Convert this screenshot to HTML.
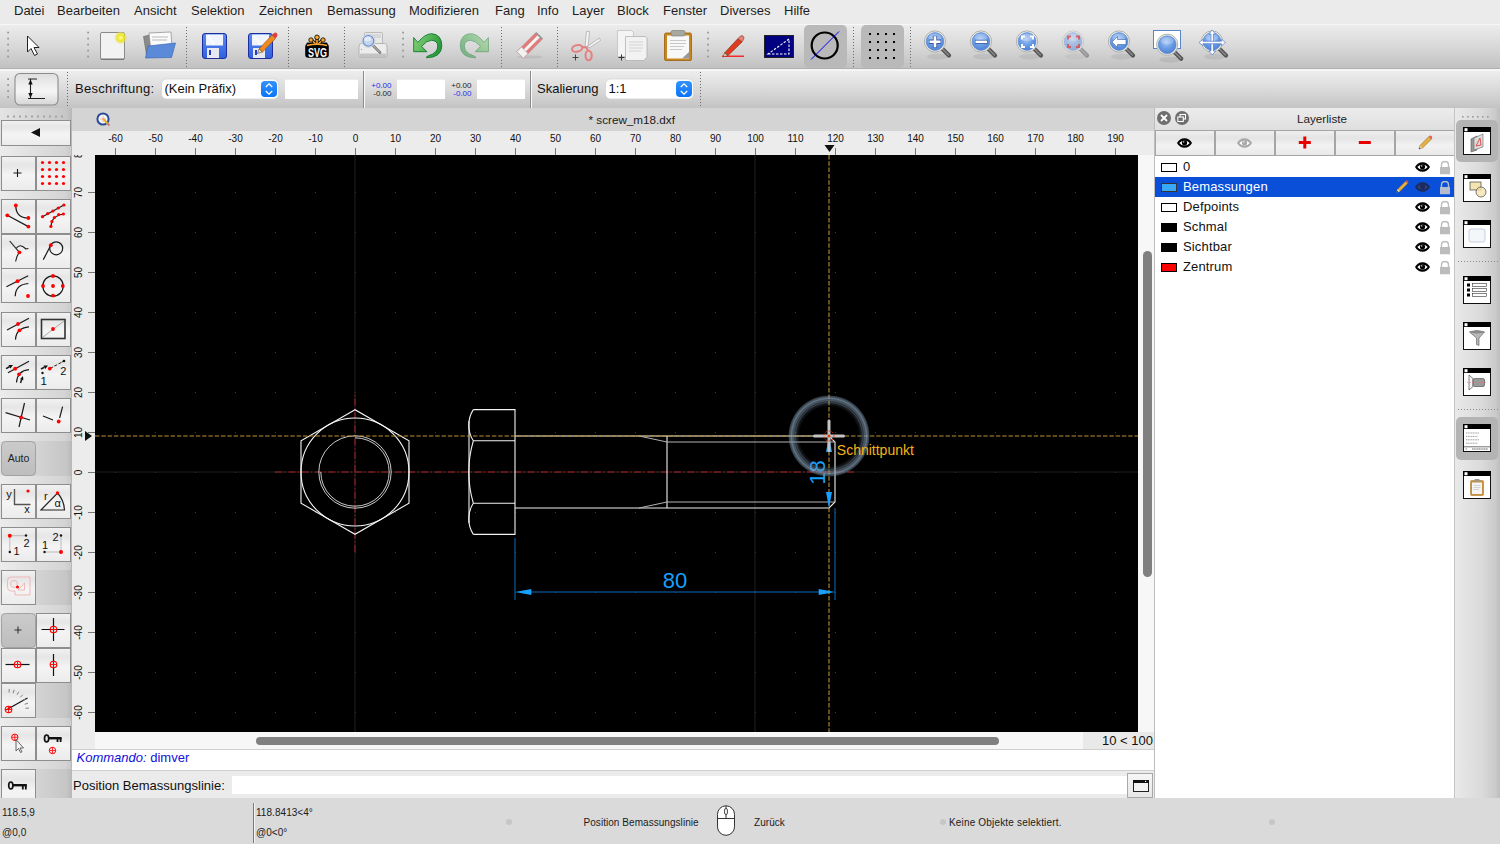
<!DOCTYPE html>
<html><head><meta charset="utf-8">
<style>
*{margin:0;padding:0;box-sizing:border-box}
html,body{width:1500px;height:844px;overflow:hidden;background:#e4e4e4;font-family:"Liberation Sans",sans-serif;color:#111}
.a{position:absolute}
#menu{left:0;top:0;width:1500px;height:25px;background:#ebebeb;border-bottom:1px solid #f6f6f6}
#menu span{position:absolute;top:3px;font-size:13px;color:#1e1e1e;white-space:nowrap}
#tb1{left:0;top:25px;width:1500px;height:44px;background:linear-gradient(#ececec,#d6d6d6 60%,#c6c6c6);border-bottom:1px solid #a9a9a9}
#tb2{left:0;top:69px;width:1500px;height:39px;background:linear-gradient(#f0f0f0,#dcdcdc 60%,#c4c4c4);border-top:1px solid #f4f4f4;border-bottom:1px solid #aaa}
.hdl{position:absolute;width:2px;background-image:radial-gradient(circle,#888 0.9px,transparent 1.1px);background-size:2px 6px}
.sepd{position:absolute;width:1px;background-image:linear-gradient(#7a7a7a 50%,transparent 50%);background-size:1px 4px}
#left{left:0;top:108px;width:72px;height:690px;background:linear-gradient(90deg,#f4f4f4,#dcdcdc 60%,#c4c4c4)}
.tbtn{position:absolute;width:35px;height:35px;background:linear-gradient(#fbfbfb,#ececec);border:1px solid #b4b4b4;border-radius:1px}
#mdititle{left:72px;top:108px;width:1082px;height:23px;background:#d4d4d4}
#rtop{left:72px;top:131px;width:1082px;height:24px;background:#ececec}
#rleft{left:72px;top:155px;width:23px;height:577px;background:#ececec;overflow:hidden}
#canvas{left:95px;top:155px;width:1043px;height:577px;background:#000;overflow:hidden}
#vscroll{left:1138px;top:155px;width:16px;height:577px;background:#f7f7f7}
#hscroll{left:72px;top:732px;width:1082px;height:17px;background:#f7f7f7}
#cmdout{left:72px;top:749px;width:1082px;height:22px;background:#fff;border-top:1px solid #cfcfcf;border-bottom:1px solid #cfcfcf}
#cmdin{left:72px;top:771px;width:1082px;height:27px;background:#ebebeb}
#dock{left:1154px;top:108px;width:346px;height:690px}
#rtool{left:1454px;top:108px;width:46px;height:690px;background:linear-gradient(90deg,#e8e8e8,#d4d4d4 60%,#c0c0c0)}
#status{left:0;top:798px;width:1500px;height:46px;background:#dadada}
#status span{position:absolute;font-size:10px;color:#1a1a1a;white-space:nowrap;letter-spacing:0.05px}
</style></head><body>
<div id="menu" class="a">
<span style="left:14px">Datei</span>
<span style="left:57px">Bearbeiten</span>
<span style="left:134px">Ansicht</span>
<span style="left:191px">Selektion</span>
<span style="left:259px">Zeichnen</span>
<span style="left:327px">Bemassung</span>
<span style="left:409px">Modifizieren</span>
<span style="left:495px">Fang</span>
<span style="left:537px">Info</span>
<span style="left:572px">Layer</span>
<span style="left:617px">Block</span>
<span style="left:663px">Fenster</span>
<span style="left:720px">Diverses</span>
<span style="left:784px">Hilfe</span>
</div>
<!--S:tb1--><div id="tb1" class="a"><svg width="1500" height="44" viewBox="0 25 1500 44" style="display:block" font-family="Liberation Sans">
<defs>
<linearGradient id="tbg" x1="0" x2="0" y1="0" y2="1"><stop offset="0" stop-color="#ececec"/><stop offset="0.45" stop-color="#dadada"/><stop offset="1" stop-color="#c0c0c0"/></linearGradient>
<radialGradient id="lens" cx="0.45" cy="0.35" r="0.7"><stop offset="0" stop-color="#a8c8f4"/><stop offset="0.5" stop-color="#6c9ee6"/><stop offset="1" stop-color="#4a7cd0"/></radialGradient>
<radialGradient id="lensf" cx="0.45" cy="0.35" r="0.7"><stop offset="0" stop-color="#c8dcf4"/><stop offset="1" stop-color="#a0bce4"/></radialGradient>
<radialGradient id="glow"><stop offset="0" stop-color="#ffffb0"/><stop offset="0.45" stop-color="#f0e820"/><stop offset="0.8" stop-color="#e8e040" stop-opacity="0.6"/><stop offset="1" stop-color="#e8e040" stop-opacity="0"/></radialGradient>
<linearGradient id="blue" x1="0" x2="0" y1="0" y2="1"><stop offset="0" stop-color="#5a8cf0"/><stop offset="1" stop-color="#3060e0"/></linearGradient>
<linearGradient id="grn" x1="0" x2="1" y1="0" y2="1"><stop offset="0" stop-color="#4cc050"/><stop offset="1" stop-color="#1a8a2a"/></linearGradient>
<symbol id="mag" viewBox="0 0 32 32" overflow="visible"><ellipse cx="14" cy="26" rx="11" ry="3" fill="#000" opacity="0.07"/><path d="M18.5,18.5L25,25" stroke="#555" stroke-width="4.2" stroke-linecap="round"/><path d="M18.5,18.5L24.5,24.5" stroke="#888" stroke-width="1.5" stroke-linecap="round"/><circle cx="11" cy="11" r="10.6" fill="#f4f4ec" stroke="#a8a8a0" stroke-width="0.9"/><circle cx="11" cy="11" r="9" fill="url(#lens)" stroke="#5e86c8" stroke-width="0.6"/><ellipse cx="11" cy="7" rx="6.5" ry="3.8" fill="#fff" opacity="0.22"/></symbol>
</defs>
<rect x="0" y="25" width="1500" height="44" fill="url(#tbg)"/>
<line x1="0" y1="68.5" x2="1500" y2="68.5" stroke="#b0b0b0"/>
<rect x="7.2" y="31.7" width="1.8" height="1.8" fill="#9a9a9a"/>
<rect x="7.2" y="37.7" width="1.8" height="1.8" fill="#9a9a9a"/>
<rect x="7.2" y="43.7" width="1.8" height="1.8" fill="#9a9a9a"/>
<rect x="7.2" y="49.7" width="1.8" height="1.8" fill="#9a9a9a"/>
<rect x="7.2" y="55.7" width="1.8" height="1.8" fill="#9a9a9a"/>
<rect x="87.2" y="31.7" width="1.8" height="1.8" fill="#9a9a9a"/>
<rect x="87.2" y="37.7" width="1.8" height="1.8" fill="#9a9a9a"/>
<rect x="87.2" y="43.7" width="1.8" height="1.8" fill="#9a9a9a"/>
<rect x="87.2" y="49.7" width="1.8" height="1.8" fill="#9a9a9a"/>
<rect x="87.2" y="55.7" width="1.8" height="1.8" fill="#9a9a9a"/>
<rect x="402.2" y="31.7" width="1.8" height="1.8" fill="#9a9a9a"/>
<rect x="402.2" y="37.7" width="1.8" height="1.8" fill="#9a9a9a"/>
<rect x="402.2" y="43.7" width="1.8" height="1.8" fill="#9a9a9a"/>
<rect x="402.2" y="49.7" width="1.8" height="1.8" fill="#9a9a9a"/>
<rect x="402.2" y="55.7" width="1.8" height="1.8" fill="#9a9a9a"/>
<rect x="707.2" y="31.7" width="1.8" height="1.8" fill="#9a9a9a"/>
<rect x="707.2" y="37.7" width="1.8" height="1.8" fill="#9a9a9a"/>
<rect x="707.2" y="43.7" width="1.8" height="1.8" fill="#9a9a9a"/>
<rect x="707.2" y="49.7" width="1.8" height="1.8" fill="#9a9a9a"/>
<rect x="707.2" y="55.7" width="1.8" height="1.8" fill="#9a9a9a"/>
<line x1="186.5" y1="27" x2="186.5" y2="67" stroke="#6a6a6a" stroke-width="1" stroke-dasharray="1 2"/>
<line x1="288.5" y1="27" x2="288.5" y2="67" stroke="#6a6a6a" stroke-width="1" stroke-dasharray="1 2"/>
<line x1="344.5" y1="27" x2="344.5" y2="67" stroke="#6a6a6a" stroke-width="1" stroke-dasharray="1 2"/>
<line x1="501.5" y1="27" x2="501.5" y2="67" stroke="#6a6a6a" stroke-width="1" stroke-dasharray="1 2"/>
<line x1="557.5" y1="27" x2="557.5" y2="67" stroke="#6a6a6a" stroke-width="1" stroke-dasharray="1 2"/>
<line x1="853.5" y1="27" x2="853.5" y2="67" stroke="#6a6a6a" stroke-width="1" stroke-dasharray="1 2"/>
<line x1="910.5" y1="27" x2="910.5" y2="67" stroke="#6a6a6a" stroke-width="1" stroke-dasharray="1 2"/>
<rect x="804" y="25" width="43" height="43" rx="5" fill="#b9b9b9"/>
<rect x="861" y="25" width="43" height="43" rx="5" fill="#b9b9b9"/>
<path d="M27.5,36L27.5,52L31,48.5L34.5,55.5L37.5,54L34,47.5L39,47.5Z" fill="#fff" stroke="#222" stroke-width="1" stroke-linejoin="round"/>
<rect x="100.5" y="32.5" width="24" height="27" rx="1.5" fill="#f2f2f2" stroke="#8a8a8a"/><rect x="101" y="58.5" width="23" height="1.5" fill="#777"/>
<circle cx="120.7" cy="37.7" r="6.5" fill="url(#glow)"/>
<path d="M143.5,36.5L152,34.5L155,56.5L147,57.5Z" fill="#8a8a8a" stroke="#666" stroke-width="0.6"/><path d="M149,33L171,32L172,49L151,52Z" fill="#fafafa" stroke="#888" stroke-width="0.7"/><path d="M152,37H168M152,40H167" stroke="#aaa" stroke-width="0.8"/><path d="M148,46L175.5,43L171.5,57.5L145.5,58Z" fill="#5a8ad8" stroke="#3a6ab8" stroke-width="0.7"/>
<rect x="202.5" y="33.5" width="24" height="25" rx="2.5" fill="url(#blue)" stroke="#1e2e9e" stroke-width="1"/><rect x="206" y="34.5" width="17" height="11" fill="#f0f4fc"/><path d="M208,35.5L214,44.5" stroke="#fff" stroke-width="2" opacity="0.8"/><rect x="207" y="48" width="12" height="10" fill="#e8e8f0"/><rect x="209" y="50" width="2" height="5" fill="#2040c0"/>
<rect x="248.5" y="33.5" width="24" height="25" rx="2.5" fill="url(#blue)" stroke="#1e2e9e" stroke-width="1"/><rect x="252" y="34.5" width="17" height="11" fill="#f0f4fc"/><path d="M254,35.5L260,44.5" stroke="#fff" stroke-width="2" opacity="0.8"/><rect x="253" y="48" width="12" height="10" fill="#e8e8f0"/><rect x="255" y="50" width="2" height="5" fill="#2040c0"/>
<path d="M259,49L272,35L275.5,38.5L262.5,52Z" fill="#f08a20" stroke="#8a4a10" stroke-width="0.6"/><path d="M272,35L274,33Q275.5,32 277,33.5Q278,35 277,36.5L275.5,38.5Z" fill="#e04040"/><path d="M259,49L257.5,53.5L262.5,52Z" fill="#f4d8a8" stroke="#333" stroke-width="0.5"/>
<g stroke="#000" stroke-width="3.2" stroke-linecap="round"><path d="M317,45L317,37M317,45L311,39.7M317,45L323,39.7M317,45L308,44M317,45L326,44"/></g>
<g stroke="#f8a830" stroke-width="1.6" stroke-linecap="round"><path d="M317,45L317,37M317,45L311,39.7M317,45L323,39.7"/></g>
<g fill="#f8a830" stroke="#000" stroke-width="0.8"><circle cx="317" cy="37.3" r="2.3"/><circle cx="311" cy="40" r="2.2"/><circle cx="323" cy="40" r="2.2"/></g>
<rect x="305.2" y="43.8" width="23.6" height="14" rx="3" fill="#000"/><path d="M307,45.6Q317,43 327,45.6" stroke="#f8a830" stroke-width="1.5" fill="none"/>
<text x="308" y="56.6" font-size="13.5" font-weight="bold" fill="#fff" textLength="19" lengthAdjust="spacingAndGlyphs">SVG</text>
<rect x="364.5" y="32.5" width="18" height="14" rx="1" fill="#e8e8e8" stroke="#b0b0b0" stroke-width="0.8"/><rect x="366" y="34" width="15" height="4" fill="#d8d8d8"/>
<path d="M359,46Q359,43.5 361.5,43.5H384.5Q387,43.5 387,46V55.5Q387,57.5 385,57.5H361Q359,57.5 359,55.5Z" fill="#ececec" stroke="#a8a8a8" stroke-width="0.8"/><rect x="359.5" y="53.5" width="27" height="4" rx="1.5" fill="#c4c4c4"/><circle cx="361.5" cy="49.5" r="0.6" fill="#888"/>
<path d="M372.5,45L380,52.5" stroke="#7a7a7a" stroke-width="2.6" stroke-linecap="round"/><path d="M372.5,45L379.5,52" stroke="#c8c8c8" stroke-width="1" stroke-linecap="round"/>
<circle cx="368.4" cy="40.9" r="6.6" fill="#f4f4f4" stroke="#c8c8c8" stroke-width="0.6"/><circle cx="368.4" cy="40.9" r="5.4" fill="#c4d6ee" stroke="#5a8ad0" stroke-width="1.1"/><ellipse cx="367.5" cy="39" rx="3.5" ry="2.2" fill="#fff" opacity="0.5"/>
<linearGradient id="ugr" x1="0" x2="1" y1="0" y2="0.4"><stop offset="0" stop-color="#8ad47a"/><stop offset="1" stop-color="#2a9a3c"/></linearGradient>
<path d="M413.7,37.6L417.9,42.4Q425,33.7 431.7,33.7Q441.8,34.5 441.8,46Q441.5,57.5 426.3,57.8Q426.5,56.2 428.5,55.8Q437.8,53 437.8,46Q437.5,40.5 431.5,40.3Q427,40.3 421.5,46.3L426.9,51.7L413.7,51.7Z" fill="url(#ugr)" stroke="#0e7a2e" stroke-width="0.9" stroke-linejoin="round"/>
<g transform="translate(902.1,0) scale(-1,1)" opacity="0.5"><path d="M413.7,37.6L417.9,42.4Q425,33.7 431.7,33.7Q441.8,34.5 441.8,46Q441.5,57.5 426.3,57.8Q426.5,56.2 428.5,55.8Q437.8,53 437.8,46Q437.5,40.5 431.5,40.3Q427,40.3 421.5,46.3L426.9,51.7L413.7,51.7Z" fill="url(#ugr)" stroke="#0e7a2e" stroke-width="0.9" stroke-linejoin="round"/></g>
<ellipse cx="530" cy="57" rx="12.5" ry="1.6" fill="#000" opacity="0.07"/>
<g transform="translate(530,45) rotate(-45)"><rect x="-14" y="-4.6" width="27" height="9.2" rx="1" fill="#e07c7c" stroke="#c06a6a" stroke-width="0.5"/><rect x="-8" y="-1.4" width="21" height="3" fill="#f4f4f4"/><rect x="-14" y="-4.6" width="6.5" height="9.2" fill="#f2f2f2" stroke="#b0a0a0" stroke-width="0.5"/><rect x="12" y="-4.6" width="1.8" height="9.2" fill="#999"/></g>
<path d="M585,47L586.5,31.5L589.5,31.5L588,46Z" fill="#f6f6f6" stroke="#9a9a9a" stroke-width="0.6"/><path d="M587.5,46.5L599.5,38L600.5,40.5L589,48Z" fill="#f6f6f6" stroke="#9a9a9a" stroke-width="0.6"/>
<ellipse cx="577.2" cy="48.4" rx="5.2" ry="3.3" fill="none" stroke="#e48282" stroke-width="2.1" transform="rotate(-14 577.2 48.4)"/><ellipse cx="588.6" cy="55.5" rx="3.1" ry="4.7" fill="none" stroke="#e48282" stroke-width="2.1"/><path d="M582,47L586.5,47.5L588,51" fill="none" stroke="#e48282" stroke-width="2"/>
<path d="M572.5,57.5H578.5M575.5,54.5V60.5" stroke="#444" stroke-width="1"/>
<path d="M617.5,30.5H631.5L633.5,32.5V56.5H617.5Z" fill="#f4f4f4" stroke="#bbb" stroke-width="0.7"/><path d="M625.5,36.5H645.5L647,38V57L644,60.5H625.5Z" fill="#f2f2f2" stroke="#aaa" stroke-width="0.7"/><path d="M629,42H643M629,45H643M629,48H643M629,51H641" stroke="#ccc" stroke-width="0.8"/><path d="M618.5,57.5H624.5M621.5,54.5V60.5" stroke="#333" stroke-width="1"/>
<rect x="664.5" y="33" width="27" height="27.5" rx="1.5" fill="#c8861e" stroke="#9a6010" stroke-width="0.8"/><rect x="667" y="35.5" width="22" height="23" fill="#f8f8f8"/><path d="M670,40.5H686M670,43.5H686M670,46.5H684M670,49.5H682" stroke="#bbb" stroke-width="0.8"/><rect x="671" y="30.5" width="14" height="5.5" rx="1.5" fill="#a8a8a0" stroke="#777" stroke-width="0.6"/><path d="M682,58.5L689,58.5L689,52Z" fill="#999"/>
<path d="M722,56.2H744" stroke="#ff0000" stroke-width="1.2"/><path d="M724.5,53L738,38.5L742,42L728,55.5Z" fill="#e03a20" stroke="#7a3a10" stroke-width="0.7"/><path d="M738,38.5L740.5,36Q742,35 743.5,36.5Q744.5,38 743.5,39.5L742,42Z" fill="#e88080" stroke="#7a3a10" stroke-width="0.6"/><path d="M724.5,53L723,57L728,55.5Z" fill="#f0d0a0" stroke="#333" stroke-width="0.5"/>
<rect x="764.5" y="35.5" width="29" height="22" fill="#000080" stroke="#222" stroke-width="1"/><path d="M768,54H789V39Z" fill="none" stroke="#fff" stroke-width="1.1" stroke-dasharray="2.5 1.5"/>
<circle cx="824.7" cy="45.5" r="13" fill="none" stroke="#000" stroke-width="2.2"/><path d="M811,59.5L839,31.5" stroke="#0000ff" stroke-width="1"/>
<rect x="869" y="33" width="2" height="2" fill="#000"/>
<rect x="869" y="41" width="2" height="2" fill="#000"/>
<rect x="869" y="49" width="2" height="2" fill="#000"/>
<rect x="869" y="57" width="2" height="2" fill="#000"/>
<rect x="877" y="33" width="2" height="2" fill="#000"/>
<rect x="877" y="41" width="2" height="2" fill="#000"/>
<rect x="877" y="49" width="2" height="2" fill="#000"/>
<rect x="877" y="57" width="2" height="2" fill="#000"/>
<rect x="885" y="33" width="2" height="2" fill="#000"/>
<rect x="885" y="41" width="2" height="2" fill="#000"/>
<rect x="885" y="49" width="2" height="2" fill="#000"/>
<rect x="885" y="57" width="2" height="2" fill="#000"/>
<rect x="893" y="33" width="2" height="2" fill="#000"/>
<rect x="893" y="41" width="2" height="2" fill="#000"/>
<rect x="893" y="49" width="2" height="2" fill="#000"/>
<rect x="893" y="57" width="2" height="2" fill="#000"/>
<g><use href="#mag" x="924" y="30.5" width="32" height="32"/></g>
<g><use href="#mag" x="970" y="30.5" width="32" height="32"/></g>
<g><use href="#mag" x="1016" y="30.5" width="32" height="32"/></g>
<g opacity="0.5"><use href="#mag" x="1062" y="30.5" width="32" height="32"/></g>
<g><use href="#mag" x="1108" y="30.5" width="32" height="32"/></g>
<g><use href="#mag" x="1201" y="30.5" width="32" height="32"/></g>
<path d="M929,41.8H941M935,35.8V47.8" stroke="#3a5aa0" stroke-width="4.4"/><path d="M929.5,41.8H940.5M935,36.3V47.3" stroke="#fff" stroke-width="2.6"/>
<path d="M975,41.8H987.5" stroke="#3a5aa0" stroke-width="4"/><path d="M975.5,41.8H987" stroke="#fff" stroke-width="2.4"/>
<path d="M1022,39.5V36.5H1025M1030,36.5H1033V39.5M1033,44V47H1030M1025,47H1022V44" fill="none" stroke="#fff" stroke-width="2"/>
<g opacity="0.75"><path d="M1068,39.5V36.5H1071M1076,36.5H1079V39.5M1079,44V47H1076M1071,47H1068V44" fill="none" stroke="#e04040" stroke-width="2"/></g>
<path d="M1112,42L1117.5,36.5V39.5H1126V44.5H1117.5V47.5Z" fill="#fff" stroke="#3a5aa0" stroke-width="0.6"/>
<rect x="1153.5" y="30.5" width="27" height="18" fill="#fff" stroke="#5a86c8" stroke-width="1"/>
<use href="#mag" x="1156.2" y="33.7" width="32" height="32"/>
<g fill="#fff" stroke="#3a6ac0" stroke-width="0.6"><path d="M1212.2,30L1215.5,34H1213.4V51H1215.5L1212.2,55L1209,51H1211V34H1209Z"/><path d="M1199,42.5L1203,39.3V41.3H1221.5V39.3L1225.5,42.5L1221.5,45.7V43.7H1203V45.7Z"/></g>
</svg></div><!--E:tb1-->
<!--S:tb2--><div id="tb2" class="a"><svg width="1500" height="39" viewBox="0 69 1500 39" style="display:block" font-family="Liberation Sans">
<defs>
<linearGradient id="tbg2" x1="0" x2="0" y1="0" y2="1"><stop offset="0" stop-color="#eeeeee"/><stop offset="0.45" stop-color="#dcdcdc"/><stop offset="1" stop-color="#c2c2c2"/></linearGradient>
<linearGradient id="dbtn" x1="0" x2="0" y1="0" y2="1"><stop offset="0" stop-color="#dedede"/><stop offset="0.55" stop-color="#f6f6f6"/><stop offset="1" stop-color="#d6d6d6"/></linearGradient>
<linearGradient id="step" x1="0" x2="0" y1="0" y2="1"><stop offset="0" stop-color="#3592fc"/><stop offset="1" stop-color="#0a74f8"/></linearGradient>
</defs>
<rect x="0" y="69" width="1500" height="39" fill="url(#tbg2)"/>
<line x1="0" y1="69.5" x2="1500" y2="69.5" stroke="#f6f6f6"/>
<line x1="0" y1="107.5" x2="1500" y2="107.5" stroke="#b4b4b4"/>
<rect x="7.2" y="77.2" width="1.8" height="1.8" fill="#9a9a9a"/>
<rect x="7.2" y="83.2" width="1.8" height="1.8" fill="#9a9a9a"/>
<rect x="7.2" y="89.2" width="1.8" height="1.8" fill="#9a9a9a"/>
<rect x="7.2" y="95.2" width="1.8" height="1.8" fill="#9a9a9a"/>
<rect x="15" y="72.5" width="43" height="31.5" rx="5" fill="url(#dbtn)" stroke="#8c8c8c" stroke-width="1.1"/>
<path d="M28,78H37M30.5,78V97.5M28,97.5H45" stroke="#222" stroke-width="1.1" fill="none"/><path d="M30.5,78.5L28.3,83.5H32.7ZM30.5,97L28.3,92H32.7Z" fill="#111"/>
<line x1="67.5" y1="71" x2="67.5" y2="105" stroke="#6a6a6a" stroke-dasharray="1 2"/>
<line x1="700.5" y1="71" x2="700.5" y2="105" stroke="#6a6a6a" stroke-dasharray="1 2"/>
<text x="75" y="92" font-size="13" letter-spacing="0.27" fill="#111">Beschriftung:</text>
<rect x="161.5" y="78" width="117" height="20" rx="5" fill="#fff" stroke="#d4d4d4" stroke-width="0.8"/>
<rect x="261" y="80" width="16" height="16" rx="4" fill="url(#step)"/>
<path d="M265.8,86L269,82.8L272.2,86M265.8,90L269,93.2L272.2,90" fill="none" stroke="#fff" stroke-width="1.3"/>
<text x="164.5" y="91.8" font-size="13" fill="#111">(Kein Präfix)</text>
<rect x="605.5" y="78" width="88" height="20" rx="5" fill="#fff" stroke="#d4d4d4" stroke-width="0.8"/>
<rect x="676" y="80" width="16" height="16" rx="4" fill="url(#step)"/>
<path d="M680.8,86L684,82.8L687.2,86M680.8,90L684,93.2L687.2,90" fill="none" stroke="#fff" stroke-width="1.3"/>
<text x="608.5" y="91.8" font-size="13" fill="#111">1:1</text>
<rect x="285" y="78.5" width="73" height="20" fill="#c8c8c8" opacity="0.6"/><rect x="285" y="78.5" width="73" height="19.5" fill="#fff"/>
<rect x="397" y="78.5" width="48" height="20" fill="#c8c8c8" opacity="0.6"/><rect x="397" y="78.5" width="48" height="19.5" fill="#fff"/>
<rect x="477" y="78.5" width="48" height="20" fill="#c8c8c8" opacity="0.6"/><rect x="477" y="78.5" width="48" height="19.5" fill="#fff"/>
<line x1="363.5" y1="70" x2="363.5" y2="107" stroke="#8a8a8a"/><line x1="364.5" y1="70" x2="364.5" y2="107" stroke="#fafafa"/>
<line x1="530.5" y1="70" x2="530.5" y2="107" stroke="#8a8a8a"/><line x1="531.5" y1="70" x2="531.5" y2="107" stroke="#fafafa"/>
<g font-size="8" text-anchor="end"><text x="391.5" y="87" fill="#2a2af0">+0.00</text><text x="391.5" y="94.5" fill="#222">-0.00</text><text x="471.5" y="87" fill="#222">+0.00</text><text x="471.5" y="94.5" fill="#2a2af0">-0.00</text></g>
<text x="537" y="92" font-size="13" fill="#111">Skalierung</text>
</svg></div><!--E:tb2-->
<!--S:left--><div id="left" class="a"><svg width="72" height="690" viewBox="0 108 72 690" style="display:block" font-family="Liberation Sans">
<defs>
<linearGradient id="lpbg" x1="0" x2="1" y1="0" y2="0"><stop offset="0" stop-color="#ececec"/><stop offset="0.9" stop-color="#d4d4d4"/><stop offset="1" stop-color="#c8c8c8"/></linearGradient><linearGradient id="lpgrp" x1="0" x2="1" y1="0" y2="0"><stop offset="0" stop-color="#e4e4e4"/><stop offset="0.5" stop-color="#d4d4d4"/><stop offset="0.92" stop-color="#c6c6c6"/><stop offset="1" stop-color="#b8b8b8"/></linearGradient>
<linearGradient id="btn" x1="0" x2="0" y1="0" y2="1"><stop offset="0" stop-color="#f2f2f2"/><stop offset="0.25" stop-color="#e6e6e6"/><stop offset="0.55" stop-color="#f4f4f4"/><stop offset="1" stop-color="#ebebeb"/></linearGradient>
<linearGradient id="btnc" x1="0" x2="0" y1="0" y2="1"><stop offset="0" stop-color="#cbcbcb"/><stop offset="1" stop-color="#bdbdbd"/></linearGradient>
</defs>
<rect x="0" y="108" width="72" height="690" fill="url(#lpbg)"/>
<rect x="0" y="108" width="72" height="38" fill="url(#lpgrp)"/>
<rect x="0" y="156" width="72" height="35" fill="url(#lpgrp)"/>
<rect x="0" y="199" width="72" height="104" fill="url(#lpgrp)"/>
<rect x="0" y="312" width="72" height="35" fill="url(#lpgrp)"/>
<rect x="0" y="355" width="72" height="35" fill="url(#lpgrp)"/>
<rect x="0" y="398" width="72" height="35" fill="url(#lpgrp)"/>
<rect x="0" y="441" width="72" height="35" fill="url(#lpgrp)"/>
<rect x="0" y="484" width="72" height="35" fill="url(#lpgrp)"/>
<rect x="0" y="527" width="72" height="35" fill="url(#lpgrp)"/>
<rect x="0" y="570" width="72" height="35" fill="url(#lpgrp)"/>
<rect x="0" y="613" width="72" height="105" fill="url(#lpgrp)"/>
<rect x="0" y="726" width="72" height="35" fill="url(#lpgrp)"/>
<rect x="0" y="769" width="72" height="29" fill="url(#lpgrp)"/>
<line x1="71.5" y1="108" x2="71.5" y2="798" stroke="#b8b8b8"/>
<rect x="7" y="115.5" width="2" height="2" fill="#a4a4a4"/>
<rect x="13" y="115.5" width="2" height="2" fill="#a4a4a4"/>
<rect x="19" y="115.5" width="2" height="2" fill="#a4a4a4"/>
<rect x="25" y="115.5" width="2" height="2" fill="#a4a4a4"/>
<rect x="31" y="115.5" width="2" height="2" fill="#a4a4a4"/>
<rect x="37" y="115.5" width="2" height="2" fill="#a4a4a4"/>
<rect x="43" y="115.5" width="2" height="2" fill="#a4a4a4"/>
<rect x="49" y="115.5" width="2" height="2" fill="#a4a4a4"/>
<rect x="55" y="115.5" width="2" height="2" fill="#a4a4a4"/>
<rect x="61" y="115.5" width="2" height="2" fill="#a4a4a4"/>
<rect x="1.5" y="120.5" width="69" height="25" fill="url(#btn)" stroke="#8e8e8e"/>
<polygon points="31,132.5 40,128 40,137" fill="#111"/>
<rect x="1.5" y="156.5" width="34" height="34" fill="url(#btn)" stroke="#8e8e8e"/>
<rect x="36.5" y="156.5" width="34" height="34" fill="url(#btn)" stroke="#8e8e8e"/>
<rect x="1.5" y="199.5" width="34" height="34" fill="url(#btn)" stroke="#8e8e8e"/>
<rect x="36.5" y="199.5" width="34" height="34" fill="url(#btn)" stroke="#8e8e8e"/>
<rect x="1.5" y="234.5" width="34" height="34" fill="url(#btn)" stroke="#8e8e8e"/>
<rect x="36.5" y="234.5" width="34" height="34" fill="url(#btn)" stroke="#8e8e8e"/>
<rect x="1.5" y="268.5" width="34" height="34" fill="url(#btn)" stroke="#8e8e8e"/>
<rect x="36.5" y="268.5" width="34" height="34" fill="url(#btn)" stroke="#8e8e8e"/>
<rect x="1.5" y="312.5" width="34" height="34" fill="url(#btn)" stroke="#8e8e8e"/>
<rect x="36.5" y="312.5" width="34" height="34" fill="url(#btn)" stroke="#8e8e8e"/>
<rect x="1.5" y="355.5" width="34" height="34" fill="url(#btn)" stroke="#8e8e8e"/>
<rect x="36.5" y="355.5" width="34" height="34" fill="url(#btn)" stroke="#8e8e8e"/>
<rect x="1.5" y="398.5" width="34" height="34" fill="url(#btn)" stroke="#8e8e8e"/>
<rect x="36.5" y="398.5" width="34" height="34" fill="url(#btn)" stroke="#8e8e8e"/>
<rect x="1.5" y="484.5" width="34" height="34" fill="url(#btn)" stroke="#8e8e8e"/>
<rect x="36.5" y="484.5" width="34" height="34" fill="url(#btn)" stroke="#8e8e8e"/>
<rect x="1.5" y="527.5" width="34" height="34" fill="url(#btn)" stroke="#8e8e8e"/>
<rect x="36.5" y="527.5" width="34" height="34" fill="url(#btn)" stroke="#8e8e8e"/>
<rect x="1.5" y="648.5" width="34" height="34" fill="url(#btn)" stroke="#8e8e8e"/>
<rect x="36.5" y="648.5" width="34" height="34" fill="url(#btn)" stroke="#8e8e8e"/>
<rect x="1.5" y="726.5" width="34" height="34" fill="url(#btn)" stroke="#8e8e8e"/>
<rect x="36.5" y="726.5" width="34" height="34" fill="url(#btn)" stroke="#8e8e8e"/>
<rect x="1.5" y="441.5" width="34" height="34" rx="4" fill="url(#btnc)" stroke="#a2a2a2"/>
<rect x="1.5" y="570.5" width="34" height="34" fill="url(#btn)" stroke="#8e8e8e"/>
<rect x="1.5" y="613.5" width="34" height="34" rx="4" fill="url(#btnc)" stroke="#a2a2a2"/>
<rect x="36.5" y="613.5" width="34" height="34" fill="url(#btn)" stroke="#8e8e8e"/>
<rect x="1.5" y="683.5" width="34" height="34" fill="url(#btn)" stroke="#8e8e8e"/>
<rect x="1.5" y="769.5" width="34" height="40" fill="url(#btn)" stroke="#8e8e8e"/>
<path d="M13.5,173H21.5M17.5,169V177" fill="none" stroke="#1a1a1a" stroke-width="1.1"/>
<circle cx="42.5" cy="162.5" r="1.6" fill="#ff0000"/>
<circle cx="42.5" cy="169.5" r="1.6" fill="#ff0000"/>
<circle cx="42.5" cy="176.5" r="1.6" fill="#ff0000"/>
<circle cx="42.5" cy="183.5" r="1.6" fill="#ff0000"/>
<circle cx="49.5" cy="162.5" r="1.6" fill="#ff0000"/>
<circle cx="49.5" cy="169.5" r="1.6" fill="#ff0000"/>
<circle cx="49.5" cy="176.5" r="1.6" fill="#ff0000"/>
<circle cx="49.5" cy="183.5" r="1.6" fill="#ff0000"/>
<circle cx="56.5" cy="162.5" r="1.6" fill="#ff0000"/>
<circle cx="56.5" cy="169.5" r="1.6" fill="#ff0000"/>
<circle cx="56.5" cy="176.5" r="1.6" fill="#ff0000"/>
<circle cx="56.5" cy="183.5" r="1.6" fill="#ff0000"/>
<circle cx="63.5" cy="162.5" r="1.6" fill="#ff0000"/>
<circle cx="63.5" cy="169.5" r="1.6" fill="#ff0000"/>
<circle cx="63.5" cy="176.5" r="1.6" fill="#ff0000"/>
<circle cx="63.5" cy="183.5" r="1.6" fill="#ff0000"/>
<path d="M7.3,215.3L28.4,226.6" fill="none" stroke="#1a1a1a" stroke-width="1.2"/>
<path d="M15.8,205.5Q15.8,218 28.4,218" fill="none" stroke="#1a1a1a" stroke-width="1.2"/>
<circle cx="7.3" cy="215.3" r="1.9" fill="#ff0000"/>
<circle cx="28.4" cy="226.6" r="1.9" fill="#ff0000"/>
<circle cx="15.8" cy="205.5" r="1.9" fill="#ff0000"/>
<circle cx="28.4" cy="218" r="1.9" fill="#ff0000"/>
<path d="M42.5,216.7L63.9,205" fill="none" stroke="#1a1a1a" stroke-width="1.2"/>
<path d="M50.9,226.4L51.9,221.6Q54.4,215.5 63.4,214" fill="none" stroke="#1a1a1a" stroke-width="1.2"/>
<circle cx="42.5" cy="216.7" r="1.6" fill="#ff0000"/>
<circle cx="47.7" cy="213.6" r="1.6" fill="#ff0000"/>
<circle cx="52.9" cy="211" r="1.6" fill="#ff0000"/>
<circle cx="58.3" cy="208" r="1.6" fill="#ff0000"/>
<circle cx="63.9" cy="205" r="1.6" fill="#ff0000"/>
<circle cx="50.9" cy="226.4" r="1.6" fill="#ff0000"/>
<circle cx="51.9" cy="221.6" r="1.6" fill="#ff0000"/>
<circle cx="54.4" cy="217.5" r="1.6" fill="#ff0000"/>
<circle cx="58.7" cy="214.6" r="1.6" fill="#ff0000"/>
<circle cx="63.4" cy="214" r="1.6" fill="#ff0000"/>
<path d="M9.7,241L19.4,252.3M19.4,252.3Q16.5,256 15.6,261.5M16.5,248Q20,243 26,249L28.4,248.5" fill="none" stroke="#1a1a1a" stroke-width="1.1"/>
<circle cx="19.4" cy="252.3" r="1.9" fill="#ff0000"/>
<circle cx="56.2" cy="248.3" r="6.5" fill="none" stroke="#1a1a1a" stroke-width="1.2"/>
<path d="M50.8,245.2L43.3,259.6" fill="none" stroke="#1a1a1a" stroke-width="1.2"/>
<circle cx="50.8" cy="245.2" r="1.9" fill="#ff0000"/>
<path d="M6.4,286.8L28.2,275.7" fill="none" stroke="#1a1a1a" stroke-width="1.2"/>
<path d="M15.2,296.2Q15.5,284.5 28.4,283.5" fill="none" stroke="#1a1a1a" stroke-width="1.2"/>
<circle cx="17.5" cy="281.2" r="1.9" fill="#ff0000"/>
<circle cx="28" cy="296" r="1.9" fill="#ff0000"/>
<circle cx="53" cy="286" r="10.2" fill="none" stroke="#1a1a1a" stroke-width="1.2"/>
<circle cx="53" cy="276" r="1.9" fill="#ff0000"/>
<circle cx="43" cy="286" r="1.9" fill="#ff0000"/>
<circle cx="62.8" cy="286" r="1.9" fill="#ff0000"/>
<circle cx="53" cy="295.6" r="1.9" fill="#ff0000"/>
<circle cx="53" cy="286" r="1.9" fill="#ff0000"/>
<path d="M7,330L29,318.3" fill="none" stroke="#1a1a1a" stroke-width="1.2"/>
<path d="M15.5,339.6Q16,328 29,326.8" fill="none" stroke="#1a1a1a" stroke-width="1.2"/>
<circle cx="18" cy="324" r="1.9" fill="#ff0000"/>
<circle cx="19.5" cy="330.3" r="1.9" fill="#ff0000"/>
<rect x="41.5" y="319.5" width="23.5" height="19" fill="none" stroke="#333" stroke-width="1.6"/>
<path d="M43,337L64,321" fill="none" stroke="#888" stroke-width="0.7"/>
<circle cx="53" cy="329" r="1.9" fill="#ff0000"/>
<path d="M8,372.7L29,361.2" fill="none" stroke="#1a1a1a" stroke-width="1.2"/>
<path d="M16.5,382.5Q17.5,370.5 29,369.6" fill="none" stroke="#1a1a1a" stroke-width="1.2"/>
<circle cx="15.2" cy="368.7" r="1.9" fill="#ff0000"/>
<circle cx="19" cy="374.3" r="1.9" fill="#ff0000"/>
<path d="M6,368.6L9.44,366.83" fill="none" stroke="#1a1a1a" stroke-width="1.6"/>
<polygon points="13,365 10.35,368.6 8.53,365.05" fill="#111"/>
<path d="M20.5,383L21.66,379.77" fill="none" stroke="#1a1a1a" stroke-width="1.5"/>
<polygon points="23,376 23.36,380.37 19.96,379.16" fill="#111"/>
<path d="M49.8,368.6L64,361" fill="none" stroke="#222" stroke-width="1"/>
<line x1="51" y1="368" x2="62" y2="362" stroke="#f0f0f0" stroke-width="1.3" stroke-dasharray="0 2.2 1.6 1"/>
<circle cx="64" cy="361" r="1.3" fill="#111"/><circle cx="42.5" cy="373" r="1.2" fill="#111"/>
<path d="M41,369L44.42,367.29" fill="none" stroke="#1a1a1a" stroke-width="1.6"/>
<polygon points="48,365.5 45.31,369.08 43.53,365.5" fill="#111"/>
<circle cx="49.8" cy="368.6" r="1.9" fill="#ff0000"/>
<text x="40.6" y="385.2" font-size="11.5" fill="#111">1</text><text x="60.3" y="375.2" font-size="11" fill="#111">2</text>
<path d="M5.6,412.6L30,420" fill="none" stroke="#1a1a1a" stroke-width="1.2"/>
<path d="M24.5,403L19,427" fill="none" stroke="#1a1a1a" stroke-width="1.2"/>
<circle cx="21" cy="417.5" r="1.9" fill="#ff0000"/>
<path d="M43,416L53,420" fill="none" stroke="#1a1a1a" stroke-width="1.2"/>
<path d="M62.6,406.7L59.6,418" fill="none" stroke="#1a1a1a" stroke-width="1.2"/>
<circle cx="58.7" cy="421.5" r="1.9" fill="#ff0000"/>
<text x="18.5" y="462" font-size="10.5" fill="#222" text-anchor="middle">Auto</text>
<path d="M14.5,489V504.5H30.5" fill="none" stroke="#555" stroke-width="1.4"/>
<circle cx="28" cy="491" r="1.6" fill="#ff0000"/>
<text x="6.3" y="497.5" font-size="11" fill="#111">y</text><text x="24.2" y="512.8" font-size="11" fill="#111">x</text>
<path d="M41,510L57.5,493Q64,500 64.5,510Z" fill="none" stroke="#222" stroke-width="1.2"/>
<circle cx="57.5" cy="493" r="1.7" fill="#ff0000"/>
<text x="44" y="500" font-size="11" fill="#111">r</text><text x="54.6" y="506.5" font-size="11" fill="#111">α</text>
<path d="M9.8,535.7H26M9.8,535.7V552" fill="none" stroke="#b4b4b4" stroke-width="0.9"/>
<circle cx="9.8" cy="535.7" r="2" fill="#ff0000"/>
<circle cx="26" cy="535.5" r="1.2" fill="#111"/><circle cx="9.8" cy="552" r="1.2" fill="#111"/>
<text x="13.5" y="554.5" font-size="11" fill="#111">1</text><text x="23.6" y="546.5" font-size="11" fill="#111">2</text>
<path d="M44.5,552H61V535.5" fill="none" stroke="#b4b4b4" stroke-width="0.9"/>
<circle cx="61" cy="552" r="2" fill="#ff0000"/>
<circle cx="44.5" cy="552" r="1.2" fill="#111"/><circle cx="61" cy="535.5" r="1.2" fill="#111"/>
<text x="42" y="548.5" font-size="11" fill="#111">1</text><text x="52.6" y="540.5" font-size="11" fill="#111">2</text>
<path d="M7.5,580.5Q7.5,577 11,577H30V595H15V591H11Q7.5,591 7.5,587Z" fill="none" stroke="#f3a0a0" stroke-width="0.7"/>
<circle cx="14" cy="584" r="3.5" fill="none" stroke="#f0a0a0" stroke-width="0.7"/>
<path d="M18,590L24.5,583V590Z" fill="none" stroke="#f0a0a0" stroke-width="0.7"/>
<circle cx="17.5" cy="587" r="1.5" fill="#ff0000"/>
<path d="M14.5,630H21.5M18,626.5V633.5" fill="none" stroke="#333" stroke-width="1.1"/>
<path d="M41.5,629.5H64.5M53.5,618V641" fill="none" stroke="#111" stroke-width="1.2"/>
<circle cx="53.5" cy="629.5" r="3.3" fill="none" stroke="#f00" stroke-width="1.1"/>
<path d="M50.2,629.5H56.8M53.5,626.2V632.8" fill="none" stroke="#ff0000" stroke-width="0.9"/>
<path d="M5.5,664.5H29.5" fill="none" stroke="#111" stroke-width="1.2"/>
<circle cx="17.5" cy="664.5" r="3.3" fill="none" stroke="#f00" stroke-width="1.1"/>
<path d="M14.2,664.5H20.8M17.5,661.2V667.8" fill="none" stroke="#ff0000" stroke-width="0.9"/>
<path d="M53.5,654V676" fill="none" stroke="#111" stroke-width="1.2"/>
<circle cx="53.5" cy="664.5" r="3.3" fill="none" stroke="#f00" stroke-width="1.1"/>
<path d="M50.2,664.5H56.8M53.5,661.2V667.8" fill="none" stroke="#ff0000" stroke-width="0.9"/>
<path d="M6,710L27.5,698" fill="none" stroke="#111" stroke-width="1.2"/>
<path d="M9.09,692.51L9.22,689.01M13.19,693.16L14.15,689.79M17.00,694.78L18.75,691.75M20.31,697.27L22.74,694.75M22.92,700.49L25.88,698.64M24.67,704.25L28.00,703.17M25.46,708.31L28.95,708.07" fill="none" stroke="#777" stroke-width="0.9"/>
<circle cx="8.5" cy="709.5" r="3.3" fill="none" stroke="#f00" stroke-width="1.1"/>
<path d="M5.2,709.5H11.8M8.5,706.2V712.8" fill="none" stroke="#ff0000" stroke-width="0.9"/>
<circle cx="14.8" cy="737.3" r="3.2" fill="none" stroke="#f00" stroke-width="1"/>
<path d="M11.6,737.3H18M14.8,734.1V740.5" fill="none" stroke="#ff0000" stroke-width="0.8"/>
<path d="M16,739.5L16,751L18.5,748.5L20.5,752.5L22,751.8L20,748L23.5,748Z" fill="none" stroke="#444" stroke-width="0.8"/>
<ellipse cx="46.6" cy="738.4" rx="2.1" ry="3.4" fill="none" stroke="#111" stroke-width="1.7"/>
<path d="M48.8,738.2H61.6" fill="none" stroke="#111" stroke-width="2.4"/>
<path d="M57.5,738V742M60.6,738V742" fill="none" stroke="#111" stroke-width="1.8"/>
<circle cx="52.5" cy="750.5" r="3.2" fill="none" stroke="#f00" stroke-width="1"/>
<path d="M49.3,750.5H55.7M52.5,747.3V753.7" fill="none" stroke="#ff0000" stroke-width="0.8"/>
<ellipse cx="10.8" cy="785.5" rx="2.1" ry="3.5" fill="none" stroke="#111" stroke-width="1.7"/>
<path d="M13,785.2H26.8" fill="none" stroke="#111" stroke-width="2.4"/>
<path d="M22.8,785V789.5M25.8,785V789.5" fill="none" stroke="#111" stroke-width="1.8"/>
</svg></div><!--E:left-->
<div id="mdititle" class="a"><svg class="a" style="left:24px;top:4px" width="15" height="15" viewBox="0 0 15 15"><circle cx="7" cy="7" r="5.6" fill="#f4f4f4" stroke="#2a4a9a" stroke-width="2"/><path d="M4,7H10M7,4V10" stroke="#e0a0a0" stroke-width="0.7"/><path d="M7,6.5L12,12" stroke="#e8b030" stroke-width="2"/><path d="M11.5,11.5L13.5,13.5" stroke="#d06060" stroke-width="1.6"/></svg><span class="a" style="left:516.5px;top:5px;font-size:11.7px;color:#1a1a1a;white-space:nowrap">* screw_m18.dxf</span></div>
<div id="rtop" class="a"><svg width="1082" height="24" viewBox="72 131 1082 24" style="display:block">
<rect x="72" y="131" width="1082" height="24" fill="#ececec"/>
<g stroke="#777" stroke-width="1">
<line x1="115.5" y1="148" x2="115.5" y2="155"/>
<line x1="155.5" y1="148" x2="155.5" y2="155"/>
<line x1="195.5" y1="148" x2="195.5" y2="155"/>
<line x1="235.5" y1="148" x2="235.5" y2="155"/>
<line x1="275.5" y1="148" x2="275.5" y2="155"/>
<line x1="315.5" y1="148" x2="315.5" y2="155"/>
<line x1="355.5" y1="148" x2="355.5" y2="155"/>
<line x1="395.5" y1="148" x2="395.5" y2="155"/>
<line x1="435.5" y1="148" x2="435.5" y2="155"/>
<line x1="475.5" y1="148" x2="475.5" y2="155"/>
<line x1="515.5" y1="148" x2="515.5" y2="155"/>
<line x1="555.5" y1="148" x2="555.5" y2="155"/>
<line x1="595.5" y1="148" x2="595.5" y2="155"/>
<line x1="635.5" y1="148" x2="635.5" y2="155"/>
<line x1="675.5" y1="148" x2="675.5" y2="155"/>
<line x1="715.5" y1="148" x2="715.5" y2="155"/>
<line x1="755.5" y1="148" x2="755.5" y2="155"/>
<line x1="795.5" y1="148" x2="795.5" y2="155"/>
<line x1="835.5" y1="148" x2="835.5" y2="155"/>
<line x1="875.5" y1="148" x2="875.5" y2="155"/>
<line x1="915.5" y1="148" x2="915.5" y2="155"/>
<line x1="955.5" y1="148" x2="955.5" y2="155"/>
<line x1="995.5" y1="148" x2="995.5" y2="155"/>
<line x1="1035.5" y1="148" x2="1035.5" y2="155"/>
<line x1="1075.5" y1="148" x2="1075.5" y2="155"/>
<line x1="1115.5" y1="148" x2="1115.5" y2="155"/>
</g><g font-family="Liberation Sans" font-size="10" fill="#111" text-anchor="middle">
<text x="115.5" y="141.5">-60</text>
<text x="155.5" y="141.5">-50</text>
<text x="195.5" y="141.5">-40</text>
<text x="235.5" y="141.5">-30</text>
<text x="275.5" y="141.5">-20</text>
<text x="315.5" y="141.5">-10</text>
<text x="355.5" y="141.5">0</text>
<text x="395.5" y="141.5">10</text>
<text x="435.5" y="141.5">20</text>
<text x="475.5" y="141.5">30</text>
<text x="515.5" y="141.5">40</text>
<text x="555.5" y="141.5">50</text>
<text x="595.5" y="141.5">60</text>
<text x="635.5" y="141.5">70</text>
<text x="675.5" y="141.5">80</text>
<text x="715.5" y="141.5">90</text>
<text x="755.5" y="141.5">100</text>
<text x="795.5" y="141.5">110</text>
<text x="835.5" y="141.5">120</text>
<text x="875.5" y="141.5">130</text>
<text x="915.5" y="141.5">140</text>
<text x="955.5" y="141.5">150</text>
<text x="995.5" y="141.5">160</text>
<text x="1035.5" y="141.5">170</text>
<text x="1075.5" y="141.5">180</text>
<text x="1115.5" y="141.5">190</text>
</g><polygon points="824.5,145 834.5,145 829.5,152" fill="#111"/></svg></div>
<div id="rleft" class="a"><svg width="23" height="577" viewBox="72 155 23 577" style="display:block">
<rect x="72" y="131" width="23" height="601" fill="#ececec"/>
<g stroke="#777" stroke-width="1">
<line x1="88" y1="712.5" x2="95" y2="712.5"/>
<line x1="88" y1="672.5" x2="95" y2="672.5"/>
<line x1="88" y1="632.5" x2="95" y2="632.5"/>
<line x1="88" y1="592.5" x2="95" y2="592.5"/>
<line x1="88" y1="552.5" x2="95" y2="552.5"/>
<line x1="88" y1="512.5" x2="95" y2="512.5"/>
<line x1="88" y1="472.5" x2="95" y2="472.5"/>
<line x1="88" y1="432.5" x2="95" y2="432.5"/>
<line x1="88" y1="392.5" x2="95" y2="392.5"/>
<line x1="88" y1="352.5" x2="95" y2="352.5"/>
<line x1="88" y1="312.5" x2="95" y2="312.5"/>
<line x1="88" y1="272.5" x2="95" y2="272.5"/>
<line x1="88" y1="232.5" x2="95" y2="232.5"/>
<line x1="88" y1="192.5" x2="95" y2="192.5"/>
</g><g font-family="Liberation Sans" font-size="10" fill="#111" text-anchor="middle">
<text transform="translate(81.5,712.5) rotate(-90)">-60</text>
<text transform="translate(81.5,672.5) rotate(-90)">-50</text>
<text transform="translate(81.5,632.5) rotate(-90)">-40</text>
<text transform="translate(81.5,592.5) rotate(-90)">-30</text>
<text transform="translate(81.5,552.5) rotate(-90)">-20</text>
<text transform="translate(81.5,512.5) rotate(-90)">-10</text>
<text transform="translate(81.5,472.5) rotate(-90)">0</text>
<text transform="translate(81.5,432.5) rotate(-90)">10</text>
<text transform="translate(81.5,392.5) rotate(-90)">20</text>
<text transform="translate(81.5,352.5) rotate(-90)">30</text>
<text transform="translate(81.5,312.5) rotate(-90)">40</text>
<text transform="translate(81.5,272.5) rotate(-90)">50</text>
<text transform="translate(81.5,232.5) rotate(-90)">60</text>
<text transform="translate(81.5,192.5) rotate(-90)">70</text>
<text transform="translate(81.5,152.5) rotate(-90)">80</text>
</g><polygon points="85,431 85,441 92,436" fill="#111"/></svg></div>
<!--S:canvas--><div id="canvas" class="a"><svg width="1043" height="577" viewBox="95 155 1043 577" style="display:block" font-family="Liberation Sans">
<defs><pattern id="gd" x="115" y="192" width="40" height="40" patternUnits="userSpaceOnUse"><rect width="1" height="1" fill="#3c3c3c"/></pattern>
<radialGradient id="ring" cx="829" cy="436" r="41" gradientUnits="userSpaceOnUse">
<stop offset="0.72" stop-color="#6c8298" stop-opacity="0"/>
<stop offset="0.82" stop-color="#6c8298" stop-opacity="0.3"/>
<stop offset="0.92" stop-color="#8098ae" stop-opacity="0.7"/>
<stop offset="0.97" stop-color="#7890a6" stop-opacity="0.45"/>
<stop offset="1" stop-color="#6c8298" stop-opacity="0"/>
</radialGradient></defs>
<rect x="95" y="155" width="1043" height="577" fill="#000"/>
<rect x="95" y="155" width="1043" height="577" fill="url(#gd)"/>
<g stroke="#202020" stroke-width="1"><line x1="355" y1="155" x2="355" y2="732"/><line x1="755" y1="155" x2="755" y2="732"/><line x1="95" y1="472" x2="1138" y2="472"/></g>
<g stroke="#b02020" stroke-width="1" stroke-dasharray="7.2 2.1 1.4 2.6" fill="none">
<line x1="275" y1="472" x2="855" y2="472"/>
<line x1="355" y1="552" x2="355" y2="392"/>
</g>
<g fill="none" stroke="#f6f6f6" stroke-width="1.1">
<polygon points="355.00,409.65 301.00,440.82 301.00,503.18 355.00,534.35 409.00,503.18 409.00,440.82"/>
<circle cx="355" cy="472" r="54"/>
</g>
<g fill="none" stroke="#e0e0e0" stroke-width="0.9">
<circle cx="355" cy="472" r="36.2"/>
<path d="M355,437.8A34.2,34.2 0 1 1 320.8,472"/>
</g>
<g fill="none" stroke="#f2f2f2" stroke-width="1.1">
<path d="M473.3,409.65H515V534.35H473.3M473.3,440.82H515M473.3,503.18H515"/>
<path d="M473.3,409.65A29,29 0 0 0 473.3,440.82A112,112 0 0 0 473.3,503.18A29,29 0 0 0 473.3,534.35"/>
<line x1="469" y1="421" x2="469" y2="523"/>
</g>
<g fill="none" stroke="#f0f0f0" stroke-width="1.1">
<path d="M515,436H829L835,442V502L829,508H515"/>
<line x1="667" y1="436" x2="667" y2="508"/>
</g>
<g fill="none" stroke="#b4b4b4" stroke-width="1">
<path d="M639,436L667,442H835M639,508L667,502H835"/>
</g>
<g stroke="#b89030" stroke-width="1.1" stroke-dasharray="4.5 1.8">
<line x1="95" y1="436" x2="1138" y2="436"/>
<line x1="829" y1="155" x2="829" y2="732"/>
</g>
<g stroke="#0c6cc0" stroke-width="1">
<line x1="515" y1="538" x2="515" y2="600"/>
<line x1="835" y1="508" x2="835" y2="600"/>
<line x1="531" y1="592" x2="819" y2="592"/>
</g>
<g fill="#18a0ff">
<polygon points="515,592 531.3,589.1 531.3,594.9"/>
<polygon points="835,592 818.7,589.1 818.7,594.9"/>
<polygon points="829,436 826,452 832,452"/>
<polygon points="829,508 826,492 832,492"/>
</g>
<text x="675" y="587.5" font-size="22" fill="#18a0ff" text-anchor="middle">80</text>
<text transform="translate(825,472.5) rotate(-90)" font-size="22" fill="#18a0ff" text-anchor="middle">18</text>
<circle cx="829" cy="436" r="41" fill="url(#ring)"/>
<g fill="none" stroke="#9ab0c4" stroke-width="0.6" opacity="0.35"><circle cx="829" cy="436" r="33.5"/><circle cx="829" cy="436" r="35.5"/><circle cx="829" cy="436" r="37.5"/></g>
<g stroke="#c4c4c4" stroke-width="3" stroke-linecap="round"><line x1="814.5" y1="436" x2="843.5" y2="436"/><line x1="829" y1="421" x2="829" y2="450.5"/></g>
<circle cx="829" cy="436" r="5" fill="none" stroke="#e03010" stroke-width="0.9" stroke-dasharray="1.8 1.4"/>
<circle cx="829" cy="436" r="1.6" fill="#e04010"/>
<text x="836.8" y="454.6" font-size="14" fill="#f4b418">Schnittpunkt</text>
</svg></div><!--E:canvas-->

<div id="vscroll" class="a"><div class="a" style="left:4.5px;top:95.5px;width:9px;height:326.5px;border-radius:4.5px;background:#808080"></div></div>
<div id="hscroll" class="a"><div class="a" style="left:0;top:0;width:23px;height:17px;background:#ececec"></div><div class="a" style="left:183.5px;top:5px;width:743.5px;height:8px;border-radius:4px;background:#808080"></div><div class="a" style="left:1011px;top:0;width:71px;height:17px;background:#e9e9e9"></div><span class="a" style="right:1px;top:0.5px;font-size:13px;color:#111;white-space:nowrap">10 &lt; 100</span></div>
<div id="cmdout" class="a"><span class="a" style="left:4.5px;top:0.3px;font-size:13px;color:#1010d8;white-space:nowrap"><i>Kommando:</i> dimver</span></div>
<div id="cmdin" class="a"><span class="a" style="left:1px;top:7px;font-size:13px;color:#111;white-space:nowrap">Position Bemassungslinie:</span><div class="a" style="left:160px;top:5px;width:896px;height:18px;background:#fff"></div><div class="a" style="left:1055px;top:1.5px;width:26px;height:25px;background:linear-gradient(#f6f6f6,#e6e6e6);border:1px solid #a8a8a8"><svg class="a" style="left:3.5px;top:5px" width="18" height="14" viewBox="0 0 18 14"><rect x="1.5" y="1.5" width="15" height="11" fill="#f4f4f4" stroke="#222"/><rect x="1" y="1" width="16" height="3" fill="#111"/><rect x="13" y="1.8" width="1.2" height="1.2" fill="#fff"/></svg></div></div>
<!--S:dock--><div id="dock" class="a"><svg width="346" height="690" viewBox="1154 108 346 690" style="display:block" font-family="Liberation Sans">
<defs>
<linearGradient id="dtb" x1="0" x2="0" y1="0" y2="1"><stop offset="0" stop-color="#ececec"/><stop offset="1" stop-color="#dedede"/></linearGradient>
<linearGradient id="hb" x1="0" x2="0" y1="0" y2="1"><stop offset="0" stop-color="#f0f0f0"/><stop offset="0.3" stop-color="#e4e4e4"/><stop offset="0.6" stop-color="#f2f2f2"/><stop offset="1" stop-color="#e8e8e8"/></linearGradient>
<linearGradient id="rtb" x1="0" x2="1" y1="0" y2="0"><stop offset="0" stop-color="#e9e9e9"/><stop offset="0.6" stop-color="#dadada"/><stop offset="0.9" stop-color="#cacaca"/><stop offset="1" stop-color="#bdbdbd"/></linearGradient>
<symbol id="eye" viewBox="0 0 16 11"><path d="M0.5,5.5Q3,0.8 8,0.8Q13,0.8 15.5,5.5Q13,10.2 8,10.2Q3,10.2 0.5,5.5Z" fill="currentColor"/><path d="M2.8,5.5Q4.8,3 8,3Q11.2,3 13.2,5.5Q11.2,8 8,8Q4.8,8 2.8,5.5Z" fill="#fff"/><circle cx="8" cy="5.3" r="2.6" fill="currentColor"/><circle cx="7.2" cy="4.4" r="0.7" fill="#fff"/></symbol>
<symbol id="eyesel" viewBox="0 0 16 11"><path d="M0.5,5.5Q3,0.8 8,0.8Q13,0.8 15.5,5.5Q13,10.2 8,10.2Q3,10.2 0.5,5.5Z" fill="#1c2a5c"/><path d="M2.8,5.5Q4.8,3 8,3Q11.2,3 13.2,5.5Q11.2,8 8,8Q4.8,8 2.8,5.5Z" fill="#30468a"/><circle cx="8" cy="5.3" r="2.6" fill="#1c2a5c"/></symbol>
<symbol id="lock" viewBox="0 0 11 14"><path d="M2,7V4.5Q2,1 5.5,1Q9,1 9,4.5V7" fill="none" stroke="currentColor" stroke-width="1.4"/><rect x="0.5" y="6.5" width="10" height="7.5" fill="currentColor"/></symbol>
<symbol id="pencil" viewBox="0 0 16 16"><path d="M2,14L3,10.5L12,1.5L14.5,4L5.5,13Z" fill="#e8b040" stroke="#8a6a20" stroke-width="0.6"/><path d="M12,1.5L14.5,4L15.2,3.3Q15.5,2 14.3,0.9Q13.2,0 12.7,0.8Z" fill="#e05050"/><path d="M2,14L3,10.5L5.5,13Z" fill="#f0d8b0"/><path d="M2,14L2.5,12.3L3.7,13.5Z" fill="#333"/></symbol>
<symbol id="win" viewBox="0 0 28 28"><rect x="0.5" y="0.5" width="27" height="27" fill="#fff" stroke="#111"/><rect x="0" y="0" width="28" height="5" fill="#000"/><rect x="1.5" y="1.2" width="3" height="3" fill="#fff"/></symbol>
</defs>
<rect x="1154" y="108" width="301" height="690" fill="#e4e4e4"/>
<rect x="1154" y="108" width="301" height="23" fill="url(#dtb)"/>
<line x1="1154.5" y1="108" x2="1154.5" y2="798" stroke="#bdbdbd"/>
<circle cx="1164" cy="118" r="7" fill="#6e6e6e"/><path d="M1161,115L1167,121M1167,115L1161,121" stroke="#fff" stroke-width="1.8"/>
<circle cx="1182" cy="118" r="7" fill="#6e6e6e"/><rect x="1180" y="114.5" width="5.5" height="4.5" fill="none" stroke="#fff" stroke-width="1.1"/><rect x="1177.8" y="117" width="5.5" height="4.5" fill="#6e6e6e" stroke="#fff" stroke-width="1.1"/>
<text x="1322" y="123" font-size="11.7" fill="#222" text-anchor="middle">Layerliste</text>
<rect x="1155.5" y="130.5" width="59" height="25" fill="url(#hb)" stroke="#a6a6a6"/>
<rect x="1215.5" y="130.5" width="59" height="25" fill="url(#hb)" stroke="#a6a6a6"/>
<rect x="1275.5" y="130.5" width="59" height="25" fill="url(#hb)" stroke="#a6a6a6"/>
<rect x="1335.5" y="130.5" width="59" height="25" fill="url(#hb)" stroke="#a6a6a6"/>
<rect x="1395.5" y="130.5" width="59" height="25" fill="url(#hb)" stroke="#a6a6a6"/>
<use href="#eye" x="1176.5" y="137.5" width="16" height="11" style="color:#000"/>
<use href="#eye" x="1236.5" y="137.5" width="16" height="11" style="color:#a8a8a8"/>
<path d="M1304.8,136.5V148.5M1298.8,142.5H1310.8" stroke="#e80000" stroke-width="3"/>
<path d="M1358.8,142.5H1370.8" stroke="#e80000" stroke-width="3"/>
<use href="#pencil" x="1417" y="135" width="16" height="16"/>
<rect x="1155" y="156" width="299" height="642" fill="#fff"/>
<rect x="1155" y="177" width="299" height="20" fill="#0a4fd8"/>
<rect x="1161.5" y="163.5" width="15" height="8" fill="#fff" stroke="#000"/>
<text x="1183" y="171" font-size="13" letter-spacing="0.15" fill="#111">0</text>
<use href="#eye" x="1414.5" y="161.5" width="16" height="11" style="color:#000"/>
<use href="#lock" x="1439.5" y="160.5" width="11" height="14" style="color:#bcbcbc"/>
<rect x="1161.5" y="183.5" width="15" height="8" fill="#3aa8f8" stroke="#333"/>
<text x="1183" y="191" font-size="13" letter-spacing="0.15" fill="#fff">Bemassungen</text>
<use href="#eyesel" x="1414.5" y="181.5" width="16" height="11"/>
<use href="#lock" x="1439.5" y="180.5" width="11" height="14" style="color:#b4bdd0"/>
<rect x="1161.5" y="203.5" width="15" height="8" fill="#fff" stroke="#000"/>
<text x="1183" y="211" font-size="13" letter-spacing="0.15" fill="#111">Defpoints</text>
<use href="#eye" x="1414.5" y="201.5" width="16" height="11" style="color:#000"/>
<use href="#lock" x="1439.5" y="200.5" width="11" height="14" style="color:#bcbcbc"/>
<rect x="1161.5" y="223.5" width="15" height="8" fill="#000" stroke="#000"/>
<text x="1183" y="231" font-size="13" letter-spacing="0.15" fill="#111">Schmal</text>
<use href="#eye" x="1414.5" y="221.5" width="16" height="11" style="color:#000"/>
<use href="#lock" x="1439.5" y="220.5" width="11" height="14" style="color:#bcbcbc"/>
<rect x="1161.5" y="243.5" width="15" height="8" fill="#000" stroke="#000"/>
<text x="1183" y="251" font-size="13" letter-spacing="0.15" fill="#111">Sichtbar</text>
<use href="#eye" x="1414.5" y="241.5" width="16" height="11" style="color:#000"/>
<use href="#lock" x="1439.5" y="240.5" width="11" height="14" style="color:#bcbcbc"/>
<rect x="1161.5" y="263.5" width="15" height="8" fill="#f00" stroke="#000"/>
<text x="1183" y="271" font-size="13" letter-spacing="0.15" fill="#111">Zentrum</text>
<use href="#eye" x="1414.5" y="261.5" width="16" height="11" style="color:#000"/>
<use href="#lock" x="1439.5" y="260.5" width="11" height="14" style="color:#bcbcbc"/>
<use href="#pencil" x="1395" y="180" width="14" height="14"/>
<line x1="1454.5" y1="108" x2="1454.5" y2="798" stroke="#c4c4c4"/>
<rect x="1455" y="108" width="45" height="690" fill="url(#rtb)"/>
<rect x="1462" y="116" width="1.6" height="1.6" fill="#9a9a9a"/>
<rect x="1467" y="116" width="1.6" height="1.6" fill="#9a9a9a"/>
<rect x="1472" y="116" width="1.6" height="1.6" fill="#9a9a9a"/>
<rect x="1477" y="116" width="1.6" height="1.6" fill="#9a9a9a"/>
<rect x="1482" y="116" width="1.6" height="1.6" fill="#9a9a9a"/>
<rect x="1487" y="116" width="1.6" height="1.6" fill="#9a9a9a"/>
<line x1="1458" y1="261.5" x2="1498" y2="261.5" stroke="#888" stroke-dasharray="1 2"/>
<line x1="1458" y1="409.5" x2="1498" y2="409.5" stroke="#888" stroke-dasharray="1 2"/>
<rect x="1456" y="120" width="42" height="42" rx="5" fill="#b4b4b4"/>
<rect x="1456" y="417" width="42" height="43" rx="5" fill="#b4b4b4"/>
<use href="#win" x="1463" y="127" width="28" height="28"/>
<use href="#win" x="1463" y="174" width="28" height="28"/>
<use href="#win" x="1463" y="220" width="28" height="28"/>
<use href="#win" x="1463" y="276" width="28" height="28"/>
<use href="#win" x="1463" y="322" width="28" height="28"/>
<use href="#win" x="1463" y="368" width="28" height="28"/>
<use href="#win" x="1463" y="424" width="28" height="28"/>
<use href="#win" x="1463" y="471" width="28" height="28"/>
<path d="M1471,139L1477,136V150L1471,152Z" fill="#999" stroke="#555" stroke-width="0.6"/><path d="M1474,138L1483,134V147L1474,150Z" fill="#ddd" stroke="#666" stroke-width="0.6"/><path d="M1476,146L1480,138L1481,145Z" fill="none" stroke="#e03030" stroke-width="0.8"/>
<rect x="1470" y="182" width="11" height="8" fill="#f4e4b0" stroke="#444" stroke-width="0.7"/><circle cx="1481" cy="192" r="5" fill="#f4e4b0" fill-opacity="0.8" stroke="#444" stroke-width="0.7"/>
<rect x="1469" y="229" width="16" height="13" rx="2" fill="#f4f6fa" stroke="#b8c8e0" stroke-width="0.8"/>
<rect x="1467" y="283.5" width="3" height="3" fill="#000"/><rect x="1472.5" y="283.5" width="14" height="3" fill="#fff" stroke="#333" stroke-width="0.6"/>
<rect x="1467" y="288.5" width="3" height="3" fill="#000"/><rect x="1472.5" y="288.5" width="14" height="3" fill="#fff" stroke="#333" stroke-width="0.6"/>
<rect x="1467" y="293.5" width="3" height="3" fill="#000"/><rect x="1472.5" y="293.5" width="14" height="3" fill="#fff" stroke="#333" stroke-width="0.6"/>
<path d="M1469.5,332Q1477,329 1484.5,332L1479,338V345.5L1476.5,344.5V338Z" fill="#b8b8b8" stroke="#555" stroke-width="0.6"/><ellipse cx="1477" cy="332" rx="7.5" ry="1.5" fill="#8a8a8a"/>
<path d="M1469,375V390L1473,386.5V378.5Z" fill="#f4f4f4" stroke="#333" stroke-width="0.6"/><rect x="1473" y="378.5" width="11.5" height="8" rx="1.5" fill="#9a9a9a" stroke="#444" stroke-width="0.6"/><line x1="1467" y1="382.5" x2="1487" y2="382.5" stroke="#f06a6a" stroke-width="0.7" stroke-dasharray="1.5 1" opacity="0.8"/>
<line x1="1466" y1="433.0" x2="1479.0" y2="433.0" stroke="#777" stroke-width="0.7" stroke-dasharray="1.2 0.5"/>
<line x1="1466" y1="436.4" x2="1477.5" y2="436.4" stroke="#777" stroke-width="0.7" stroke-dasharray="1.2 0.5"/>
<line x1="1466" y1="439.8" x2="1479.0" y2="439.8" stroke="#777" stroke-width="0.7" stroke-dasharray="1.2 0.5"/>
<line x1="1466" y1="443.2" x2="1477.5" y2="443.2" stroke="#777" stroke-width="0.7" stroke-dasharray="1.2 0.5"/>
<line x1="1463.5" y1="446.8" x2="1490.5" y2="446.8" stroke="#333" stroke-width="0.7"/><line x1="1465.5" y1="449" x2="1467" y2="449" stroke="#555" stroke-width="0.7"/><line x1="1472" y1="449" x2="1488" y2="449" stroke="#555" stroke-width="0.9" stroke-dasharray="1.3 0.4"/>
<rect x="1470.5" y="480.5" width="13" height="15" rx="1" fill="#c8903a" stroke="#a87020" stroke-width="0.5"/><rect x="1472" y="482.5" width="10" height="11.5" fill="#f4f4f4"/><path d="M1473.5,485.5H1480.5M1473.5,487.5H1480.5M1473.5,489.5H1479" stroke="#bbb" stroke-width="0.6"/><rect x="1474.5" y="479" width="5" height="2.8" rx="0.8" fill="#9a9a90"/>
</svg></div><!--E:dock-->
<div id="status" class="a">
<span style="left:2px;top:9px">118.5,9</span><span style="left:2px;top:29px">@0,0</span>
<div class="a" style="left:253px;top:5px;width:1px;height:40px;background:#7a7a7a;box-shadow:1px 0 0 #f4f4f4"></div>
<span style="left:256px;top:9px">118.8413&lt;4°</span><span style="left:256px;top:29px">@0&lt;0°</span>
<div class="a" style="left:506px;top:21px;width:6px;height:6px;border-radius:3px;background:#c6c6c6"></div>
<span style="left:583.5px;top:19px">Position Bemassungslinie</span>
<svg class="a" style="left:716px;top:7px" width="20" height="31" viewBox="0 0 20 31"><rect x="1.5" y="0.8" width="17" height="29.5" rx="8.5" fill="#fff" stroke="#333" stroke-width="1"/><path d="M1.5,13.5H18.5M10,0.8V13.5" stroke="#333" stroke-width="1"/><rect x="8.6" y="3.5" width="2.8" height="6" rx="1.4" fill="#fff" stroke="#333" stroke-width="0.9"/></svg>
<span style="left:754px;top:19px">Zurück</span>
<div class="a" style="left:940px;top:21px;width:6px;height:6px;border-radius:3px;background:#c6c6c6"></div>
<span style="left:949px;top:19px;letter-spacing:0.17px">Keine Objekte selektiert.</span>
<div class="a" style="left:1269px;top:21px;width:6px;height:6px;border-radius:3px;background:#c6c6c6"></div>
</div>
</body></html>
